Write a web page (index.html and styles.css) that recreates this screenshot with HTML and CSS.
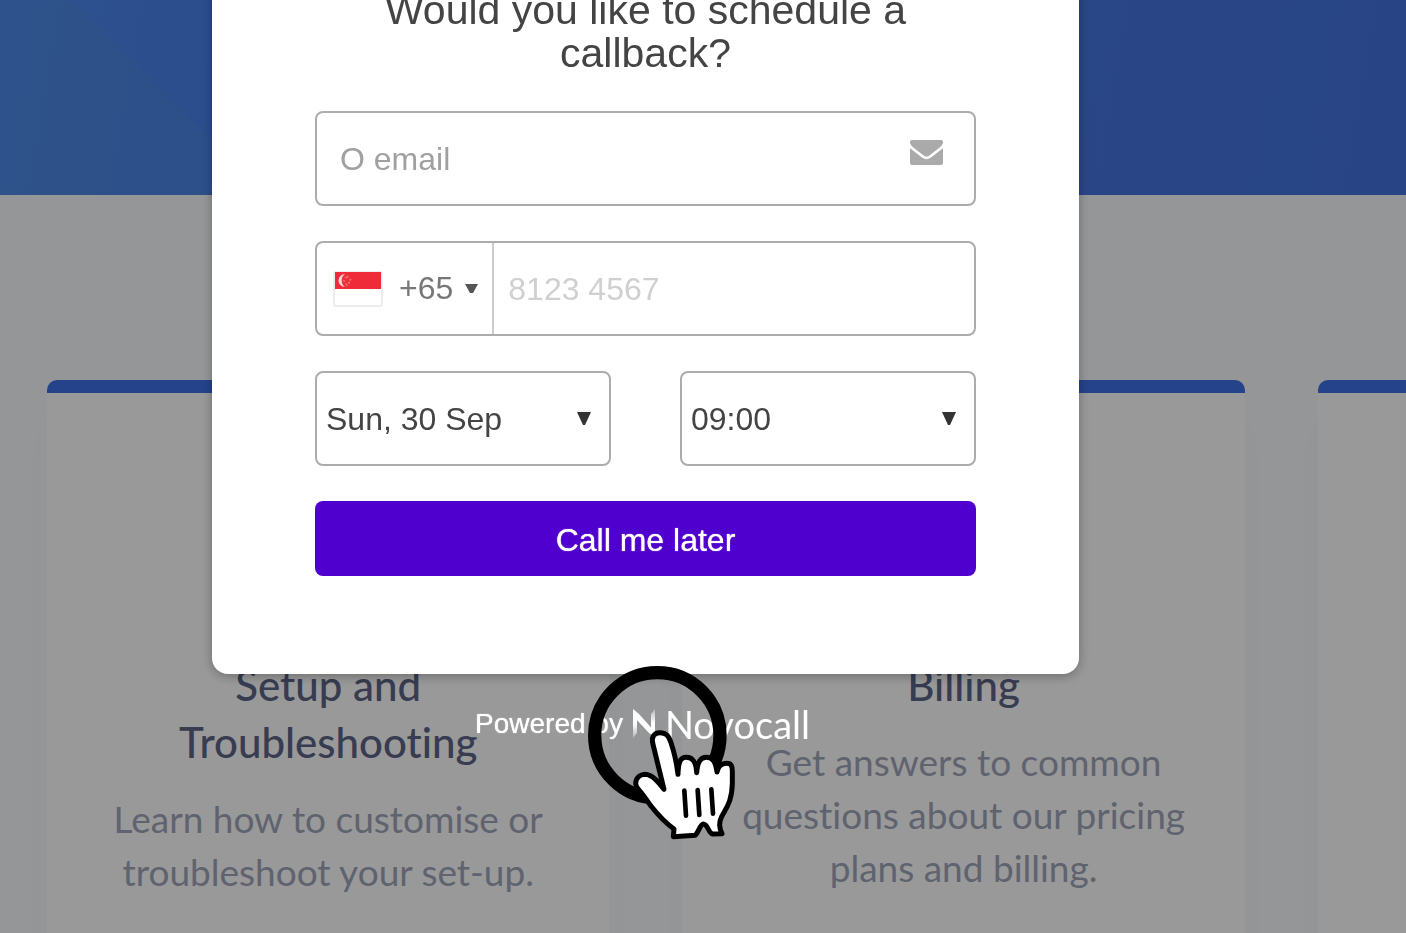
FILE: index.html
```html
<!DOCTYPE html>
<html lang="en">
<head>
<meta charset="utf-8">
<meta name="viewport" content="width=device-width, initial-scale=1">
<title>Schedule a callback</title>
<link rel="stylesheet" href="styles.css">
</head>
<body>
<div class="page">
  <header class="hero"></header>
  <main class="topics">
    <article class="topic">
      <h2 class="topic-title">Setup and Troubleshooting</h2>
      <p class="topic-text">Learn how to customise or troubleshoot your set-up.</p>
    </article>
    <article class="topic">
      <h2 class="topic-title">Billing</h2>
      <p class="topic-text">Get answers to common questions about our pricing plans and billing.</p>
    </article>
    <article class="topic"></article>
  </main>
</div>

<div class="overlay">
  <div class="widget">
    <section class="modal" role="dialog" aria-labelledby="modal-title">
      <h1 class="modal-title" id="modal-title">Would you like to schedule a callback?</h1>
      <form class="form">
        <div class="field">
          <input class="input" type="email" placeholder="O email" aria-label="Email">
          <svg class="mail-icon" viewBox="0 0 33 25" aria-hidden="true">
            <path d="M2 0H31Q33 0 33 2V3Q32 6 29 8L20 15Q16.500 18 13 15L4 8Q1 6 0 3V2Q0 0 2 0Z"/>
            <path d="M0 8Q1 9 3 10.500L12 17.500Q16.500 21 21 17.500L30 10.500Q32 9 33 8V23Q33 25 31 25H2Q0 25 0 23Z"/>
          </svg>
        </div>
        <div class="field">
          <button class="country" type="button" aria-label="Country code +65">
            <svg class="flag" viewBox="0 0 50 36" aria-hidden="true">
              <rect x="1" y="1" width="48" height="34" rx="2" fill="#fff" stroke="#ececec" stroke-width="2"/>
              <path d="M2 1H48V18H2Z" fill="#ef2b3a"/>
              <path d="M12 3A6.500 6.500 0 1 0 12 16A8 8 0 0 1 12 3Z" fill="#fbd5d5"/>
              <path d="M14 5L18 9.500L14 14L11 9.500Z" fill="none" stroke="#f2685f" stroke-width="2" stroke-dasharray="2 2"/>
            </svg>
            <span>+65</span>
            <svg class="country-arrow" viewBox="0 0 13 10" aria-hidden="true"><path d="M0 0H13L8 9H5Z"/></svg>
          </button>
          <input class="input phone" type="tel" placeholder="8123 4567" aria-label="Phone number">
        </div>
        <div class="pair">
          <div class="field">
            <select class="select" aria-label="Date"><option>Sun, 30 Sep</option></select>
            <svg class="select-arrow" viewBox="0 0 14 14" aria-hidden="true"><path d="M0 0H14L8 13H6Z"/></svg>
          </div>
          <div class="field">
            <select class="select" aria-label="Time"><option>09:00</option></select>
            <svg class="select-arrow" viewBox="0 0 14 14" aria-hidden="true"><path d="M0 0H14L8 13H6Z"/></svg>
          </div>
        </div>
        <button class="submit" type="submit">Call me later</button>
      </form>
    </section>
    <a class="powered" href="#">
      <span>Powered by</span>
      <svg class="brand-mark" viewBox="0 0 24 32" aria-hidden="true">
        <defs>
          <linearGradient id="left" x1="0" y1="0" x2="0" y2="1"><stop offset="0.500" stop-color="#fff"/><stop offset="1" stop-color="#fff" stop-opacity="0.300"/></linearGradient>
          <linearGradient id="right" x1="0" y1="1" x2="0" y2="0"><stop offset="0.500" stop-color="#fff"/><stop offset="1" stop-color="#fff" stop-opacity="0.300"/></linearGradient>
        </defs>
        <path d="M1 1L5 7V25L1 30Z" fill="url(#left)"/>
        <path d="M19 6L23 1V29L19 24Z" fill="url(#right)"/>
        <path d="M1 1L7 6L23 24V29L17 25L4 11Z" fill="#fff"/>
      </svg>
      <span class="brand">Novocall</span>
    </a>
    <svg class="pointer" viewBox="0 0 510 570" aria-hidden="true">
      <circle cx="232" cy="241" r="188" fill="none" stroke="#000" stroke-width="40"/>
      <path d="M252 403L219 268C213 246 222 233 240 233C258 233 266 242 273 263C284 295 290 325 294 358C295 325 299 307 319 307C340 307 348 322 350 353C353 323 359 307 380 307C400 307 407 322 411 351C414 334 425 325 440 325C455 325 457 334 457 350V385C456 440 439 458 425 485C417 500 418 520 426 536L398 537C386 535 383 507 370 507C359 509 358 529 346 541L280 545L282 522C248 498 227 471 212 452C201 436 189 418 173 400C160 383 170 360 195 358C218 359 236 382 252 403Z" fill="#fff" stroke="#000" stroke-width="15" stroke-linejoin="round"/>
      <path d="M313 407L318 482M353 405L358 480M394 403L399 476" stroke="#000" stroke-width="14" stroke-linecap="round"/>
    </svg>
  </div>
</div>
</body>
</html>
```
FILE: styles.css
```css
* {
  box-sizing: border-box;
}

body {
  margin: 0;
  background: #f9fbfd;
  font-family: "Liberation Sans", Arial, sans-serif;
  overflow: hidden;
}

.page {
  height: 100vh;
  overflow: hidden;
}

.hero {
  height: 195px;
  background: linear-gradient(100deg, #4c87ee 0%, #4779e6 40%, #4472de 100%);
}

.hero::before {
  content: "";
  display: block;
  width: 267px;
  height: 100%;
  background: #5a96cc28;
  clip-path: polygon(0 0, 72px 0, 100% 100%, 0 100%);
}

.topics {
  display: grid;
  grid-auto-flow: column;
  grid-auto-columns: 40vw;
  gap: 73px;
  padding: 185px 0 0 47px;
}

.topic {
  min-height: 640px;
  padding: 264px 56px 60px;
  border-top: 13px solid #3e70e8;
  border-radius: 10px 10px 0 0;
  background: #fff;
  box-shadow: 0 40px 40px #25408008;
  font-family: Lato, "Open Sans", sans-serif;
  font-variant-ligatures: none;
  text-align: center;
}

.topic-title {
  margin: 0 0 21px;
  color: #5c6488;
  font-size: 42px;
  font-weight: 500;
  line-height: 57px;
}

.topic-text {
  margin: 0;
  color: #9fa5b9;
  font-size: 37px;
  line-height: 53px;
}

.overlay {
  position: fixed;
  inset: 0;
  display: flex;
  justify-content: center;
  align-items: flex-start;
  padding-right: 115px;
  background: rgba(0, 0, 0, 0.4);
}

.widget {
  position: relative;
  width: 867px;
  margin-top: -50px;
}

.modal {
  padding: 39px 103px 98px;
  border-radius: 16px;
  background: #fff;
  box-shadow: 0 2px 12px rgba(0, 0, 0, 0.3);
}

.modal-title {
  margin: 0 0 36px;
  padding: 0 50px;
  color: #444;
  font-size: 41px;
  font-weight: 400;
  line-height: 43px;
  text-align: center;
}

.form {
  display: grid;
  gap: 35px;
}

.field {
  position: relative;
  display: flex;
  height: 95px;
  border: 2px solid #acacac;
  border-radius: 8px;
  background: #fff;
}

.input,
.select {
  flex: 1;
  min-width: 0;
  border: 0;
  outline: 0;
  background: transparent;
  font-family: inherit;
  font-size: 32px;
}

.input {
  padding: 2px 23px 0;
  color: #444;
}

.input::placeholder {
  color: #a0a0a0;
  opacity: 1;
}

.phone {
  padding: 2px 14px 0;
}

.phone::placeholder {
  color: #d0d0d0;
}

.select {
  appearance: none;
  padding: 0 9px;
  color: #444;
}

.mail-icon {
  width: 33px;
  height: 25px;
  margin: 27px 31px 0 0;
  fill: #aaa;
}

.country {
  display: flex;
  align-items: center;
  gap: 16px;
  padding: 0 14px 0 16px;
  border: 0;
  border-right: 2px solid #ccc;
  background: transparent;
  color: #777;
  font-family: inherit;
  font-size: 32px;
}

.flag {
  width: 50px;
  height: 36px;
}

.country-arrow {
  width: 13px;
  height: 10px;
  margin-left: -4px;
  fill: #555;
}

.select-arrow {
  position: absolute;
  top: 39px;
  right: 18px;
  width: 14px;
  height: 14px;
  fill: #333;
  pointer-events: none;
}

.pair {
  display: grid;
  grid-template-columns: 1fr 1fr;
  gap: 69px;
}

.submit {
  height: 75px;
  padding: 4px 0 0;
  border: 0;
  border-radius: 8px;
  background: #5000ce;
  color: #fff;
  font-family: inherit;
  font-size: 32px;
  text-shadow: 0 0 1px #fff;
}

.powered {
  display: flex;
  justify-content: center;
  align-items: center;
  gap: 9px;
  margin-top: 30px;
  padding-right: 6px;
  color: #fff;
  font-size: 28px;
  line-height: 40px;
  text-decoration: none;
  text-shadow: 0 0 1px #fff;
}

.brand-mark {
  width: 24px;
  height: 32px;
}

.brand {
  font-family: Lato, sans-serif;
  font-size: 38px;
  font-weight: 400;
  text-shadow: none;
}

.pointer {
  position: absolute;
  top: 705px;
  left: 368px;
  width: 170px;
  height: 190px;
}
```
